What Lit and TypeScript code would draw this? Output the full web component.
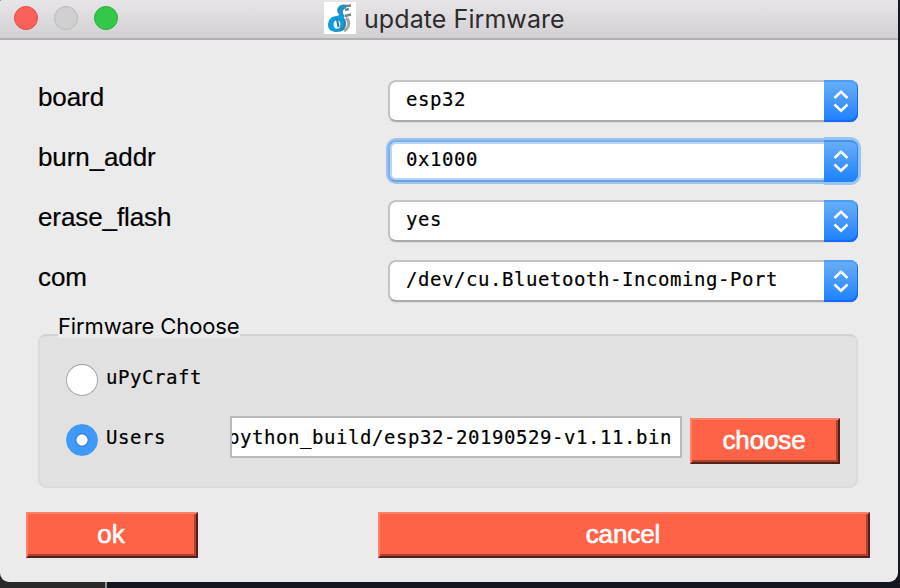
import { LitElement, html, css } from "lit";
import { customElement, property } from "lit/decorators.js";
import { classMap } from "lit/directives/class-map.js";

@customElement("combo-box")
class ComboBox extends LitElement {
  @property() value = "";
  @property({ type: Boolean }) focused = false;

  static styles = css`
    :host { display: block; width: 470px; height: 42px; }
    .combo {
      display: flex; box-sizing: border-box; height: 42px; background: #fff;
      border: 2px solid #c4c4c4; border-bottom-color: #aaa; border-right: 0;
      border-radius: 8px; box-shadow: 0 1px 1px #dedede;
    }
    .focused { border-color: #82aee2; border-bottom-color: #719fd6;
      box-shadow: 0 0 0 2px #9ac4f0, inset 0 0 0 2px #b3d6fa; }
    .value {
      flex: 1; padding-left: 16px; font: 19px/35px "DejaVu Sans Mono", monospace;
      letter-spacing: 0.56px; color: #000; white-space: pre; -webkit-text-stroke: 0.2px #000;
    }
    .arrows {
      width: 34px; height: 42px; margin-top: -2px; box-sizing: border-box;
      display: flex; align-items: center; justify-content: center;
      border-radius: 0 8px 8px 0;
      background: linear-gradient(#69aff7, #4598f9 50%, #1b80ff);
      box-shadow: inset -1px -2px 0 #1767fb, inset 0 2px 0 #4b9df6;
    }
    .focused .arrows { box-shadow: 0 0 0 3px #9ac4f0, inset 0 2px 0 #4892ef, inset -1px -1px 0 #2880f4; clip-path: inset(-4px -4px -4px 0); }
  `;

  render() {
    return html`<div class=${classMap({ combo: true, focused: this.focused })}>
      <span class="value">${this.value}</span>
      <span class="arrows">
        <svg width="16" height="24" viewBox="0 0 16 24" fill="none" stroke="#fff" stroke-width="2.5">
          <path d="M1.5 9 L8 2.8 L14.5 9 M1.5 15.5 L8 21.7 L14.5 15.5" />
        </svg>
      </span>
    </div>`;
  }
}

@customElement("app-root")
class AppRoot extends LitElement {
  static styles = css`
    :host {
      display: block; width: 900px; height: 588px; overflow: hidden;
      background: linear-gradient(90deg, #292929 0 105px, #929292 105px 107px, #14171d 107px);
    }
    .window {
      width: 898px; height: 582px; overflow: hidden; background: #ebebeb;
      border-radius: 2px 0 9px 9px; display: flex; flex-direction: column;
    }
    .bar {
      height: 40px; box-sizing: border-box; flex: none; display: grid;
      grid-template-columns: 324px auto 1fr; border-bottom: 2px solid #b1afb1;
      background: linear-gradient(#e7e5e7, #d2d0d2);
    }
    .lights { display: flex; gap: 16px; padding: 6px 0 0 14px; }
    .light { width: 24px; height: 24px; box-sizing: border-box; border-radius: 50%; border: 1.5px solid; }
    .close { background: #fc605b; border-color: #df4c47; }
    .min { background: #d1d0d1; border-color: #bababa; }
    .max { background: #34c84a; border-color: #2bad3c; }
    .title { display: flex; gap: 8px; }
    .logo { margin-top: 2px; }
    .name { font: 25px/38px Inter, sans-serif; color: #2d2b2d; letter-spacing: 0.08px; white-space: nowrap; }
    .form { padding: 40px 40px 0 38px; display: grid; gap: 18px; }
    .row { display: flex; justify-content: space-between; height: 42px; }
    .label { font: 26px/34px "Liberation Sans", sans-serif; letter-spacing: -0.1px; color: #000; -webkit-text-stroke: 0.2px #000; }
    .group {
      margin: 11px 40px 0 38px; height: 175px; display: flex; flex-direction: column;
      color: #000;
    }
    .panel {
      height: 154px; margin-top: -4px; box-sizing: border-box; border-radius: 8px; border: 2px solid #dbdbdb;
      border-top-color: #d2d2d2; border-bottom-color: #dcdcdc;
      background: #e1e1e1; padding: 26px 16px 0 26px;
    }
    .legend {
      position: relative; align-self: flex-start; margin-left: 20px; height: 25px; width: 182px; background: #ebebeb;
      font: 22px/27px Inter, sans-serif; letter-spacing: -0.13px; white-space: nowrap;
    }
    .option { display: flex; height: 32px; }
    .second { margin-top: 28px; height: 60px; align-items: flex-start; }
    .radio {
      flex: none; width: 32px; height: 32px; border-radius: 50%; box-sizing: border-box;
      background: #fff; border: 1.5px solid #aaa; border-top-color: #999; margin-top: 2px;
    }
    .checked { background: radial-gradient(circle, #fff 0 5px, #3382df 6px, #4099fa 8px); border-color: #4399f5; }
    .mono { font: 19px/32px "DejaVu Sans Mono", monospace; letter-spacing: 0.56px; white-space: pre; -webkit-text-stroke: 0.2px #000; }
    .caption { margin-left: 8px; width: 124px; margin-top: -1px; }
    .path {
      width: 452px; height: 42px; box-sizing: border-box; border: 2px solid #b9b9b9; background: #fff;
      display: flex; justify-content: flex-end; overflow: hidden; padding-right: 8px; margin-top: -6px;
      line-height: 39px;
    }
    .button {
      height: 46px; box-sizing: border-box; background: #ff6347; color: #fff;
      border: 2px solid; border-color: #ff7f69 #551e16 #551e16 #ff7f69;
      box-shadow: inset -2px -2px 0 #ac4331; text-align: center; padding: 0 2px 3px 0;
      font: 26px/38px "Liberation Sans", sans-serif; letter-spacing: -0.1px; -webkit-text-stroke: 0.6px #fff;
    }
    .choose { width: 150px; margin: -4px 0 0 8px; }
    .actions { display: flex; justify-content: space-between; padding: 24px 28px 0 26px; }
    .ok { width: 172px; }
    .cancel { width: 492px; }
  `;

  private fields = [
    { label: "board", value: "esp32", focused: false },
    { label: "burn_addr", value: "0x1000", focused: true },
    { label: "erase_flash", value: "yes", focused: false },
    { label: "com", value: "/dev/cu.Bluetooth-Incoming-Port", focused: false },
  ];

  render() {
    return html`<div class="window">
      <header class="bar">
        <div class="lights">
          <span class="light close"></span><span class="light min"></span><span class="light max"></span>
        </div>
        <div class="title">
          <svg class="logo" width="32" height="32" viewBox="0 0 32 32">
            <rect width="32" height="32" fill="#fff" />
            <path d="M22 16 C26 19 26 25 20 29" fill="none" stroke="#a3a8aa" stroke-width="3" />
            <path d="M22 4 L27 3.5 M21 8 L25 7 M21 14 L27 12.5" stroke="#7b868b" stroke-width="2.4" fill="none" />
            <path d="M23 3 C17 1 12 5 13.5 10 C14.5 13 17 13.5 18 17 L21 14 C18 11 18 8 22 6 Z" fill="#2492c0" />
            <path d="M13 14 C7 14 4 18 4 23 C4 28 8 30 13 30 C19 30 22 26 22 21 C22 17 19 15 17 12 Z" fill="#119cdb" />
            <ellipse cx="13" cy="22.5" rx="3.4" ry="4.3" fill="#e4f3fa" />
            <path d="M13 17 L14.5 25" stroke="#31779a" stroke-width="2" />
            <path d="M19 17 C23 21 21 27 16 29" fill="none" stroke="#397b9c" stroke-width="1.5" />
          </svg>
          <span class="name">update Firmware</span>
        </div>
      </header>
      <div class="form">
        ${this.fields.map(
          (f) => html`<div class="row">
            <span class="label">${f.label}</span>
            <combo-box .value=${f.value} .focused=${f.focused}></combo-box>
          </div>`
        )}
      </div>
      <div class="group">
        <span class="legend">Firmware Choose</span>
        <div class="panel">
          <div class="option"><span class="radio"></span><span class="mono caption">uPyCraft</span></div>
          <div class="option second">
            <span class="radio checked"></span><span class="mono caption">Users</span>
            <div class="mono path"><span>python_build/esp32-20190529-v1.11.bin</span></div>
            <button class="button choose">choose</button>
          </div>
        </div>
      </div>
      <div class="actions">
        <button class="button ok">ok</button>
        <button class="button cancel">cancel</button>
      </div>
    </div>`;
  }
}
